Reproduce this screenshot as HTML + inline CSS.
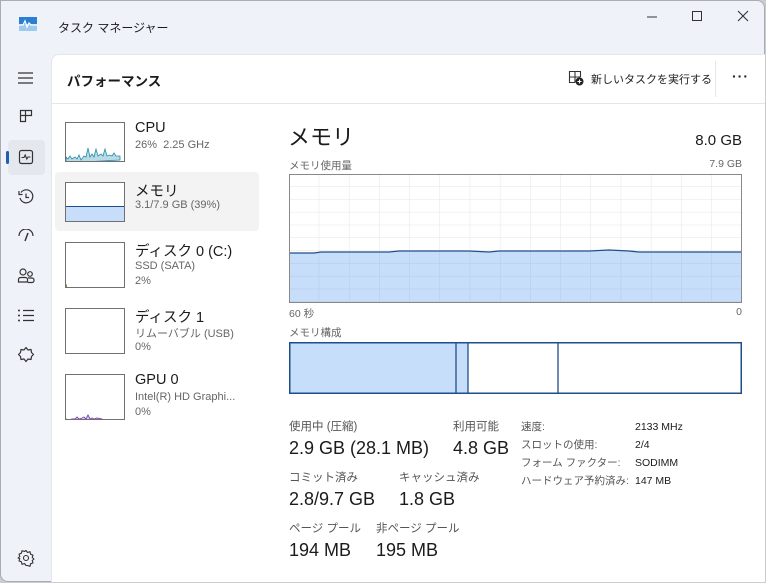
<!DOCTYPE html>
<html><head><meta charset="utf-8"><style>
*{margin:0;padding:0;box-sizing:border-box}
body{width:766px;height:583px;overflow:hidden;background:#c9ccd1;font-family:"Liberation Sans","Noto Sans CJK JP",sans-serif;color:#1b1b1b;position:relative}
.win{position:absolute;left:0;top:0;width:765px;height:582px;background:#eff3f9;border:1px solid #a9adb3;border-radius:0 8px 8px 8px}
.a{position:absolute;white-space:nowrap}
.panel{position:absolute;left:50px;top:53px;width:714px;height:528px;background:#fff;border-radius:8px 0 0 0;border-left:1px solid #e3e6ea;border-top:1px solid #e3e6ea}
.thumb{position:absolute;left:64px;width:60px;border:1px solid #707070;background:#fff;overflow:hidden}
.s{font-size:11px;color:#666}
.lbl{font-size:10.5px;color:#666}
.val{font-size:18px;color:#1b1b1b}
svg{position:absolute}
</style></head><body>
<div class="win">
<svg style="left:18px;top:16px" width="18" height="14" viewBox="0 0 18 14"><rect x="0" y="0" width="18" height="14" rx="1" fill="#9cc9f0"/><rect x="0" y="0" width="18" height="7" fill="#2a7fd4"/><path d="M0 8 L4 8 L6 4 L8 10 L10 6 L12 8 L18 8" stroke="#fff" stroke-width="1.3" fill="none"/></svg>
<div class="a" style="left:57px;top:18px;font-size:12px">タスク マネージャー</div>
<svg style="left:645px;top:10px" width="12" height="12"><line x1="1" y1="6" x2="11" y2="6" stroke="#333" stroke-width="1"/></svg>
<svg style="left:690px;top:9px" width="12" height="12"><rect x="1.5" y="1.5" width="9" height="9" stroke="#333" fill="none"/></svg>
<svg style="left:736px;top:9px" width="12" height="12"><path d="M1 1L11 11M11 1L1 11" stroke="#333" stroke-width="1.1"/></svg>
<svg style="left:16px;top:70px" width="18" height="14"><path d="M1 2h15M1 7h15M1 12h15" stroke="#333" stroke-width="1.2"/></svg>
<svg style="left:18px;top:108px" width="14" height="14"><path d="M1.5 1.5h5v11h-5zM6.5 1.5h6v5h-11M6.5 6.5" stroke="#333" stroke-width="1.2" fill="none"/></svg>
<div class="a" style="left:7px;top:139px;width:37px;height:35px;background:#e4e8ee;border-radius:4px"></div>
<div class="a" style="left:5px;top:150px;width:3px;height:13px;background:#1f5fb0;border-radius:2px"></div>
<svg style="left:17px;top:148px" width="16" height="16"><rect x="1.5" y="1.5" width="13" height="13" rx="2" stroke="#333" fill="none" stroke-width="1.2"/><path d="M3.5 8.5h2.5l1.2-2.5 1.6 4 1.2-2h2.5" stroke="#333" fill="none" stroke-width="1.1"/></svg>
<svg style="left:16px;top:187px" width="18" height="18"><path d="M4 4.5A6.5 6.5 0 1 1 3 10" stroke="#333" fill="none" stroke-width="1.2"/><path d="M2 3v3.5h3.5" stroke="#333" fill="none" stroke-width="1.2"/><path d="M9 5.5v4h3" stroke="#333" fill="none" stroke-width="1.2"/></svg>
<svg style="left:16px;top:228px" width="18" height="16"><path d="M2 7a7 7 0 0 1 14 0" stroke="#333" fill="none" stroke-width="1.2"/><path d="M11 4L8 12" stroke="#333" stroke-width="1.5"/></svg>
<svg style="left:16px;top:266px" width="18" height="18"><circle cx="6" cy="5" r="3" stroke="#333" fill="none" stroke-width="1.2"/><circle cx="13" cy="7" r="2.3" stroke="#333" fill="none" stroke-width="1.2"/><path d="M1.5 15v-2.5a2 2 0 0 1 2-2h5a2 2 0 0 1 2 2V15zM11 11h4a2 2 0 0 1 2 2v.5a2 2 0 0 1-2 2h-4" stroke="#333" fill="none" stroke-width="1.2"/></svg>
<svg style="left:16px;top:307px" width="18" height="16"><path d="M6 2.5h11M6 7.5h11M6 12.5h11" stroke="#333" stroke-width="1.2"/><circle cx="2" cy="2.5" r="1" fill="#333"/><circle cx="2" cy="7.5" r="1" fill="#333"/><circle cx="2" cy="12.5" r="1" fill="#333"/></svg>
<svg style="left:16px;top:345px" width="18" height="18"><path d="M9 1.5l2 2.5 3-.5.5 3 2 2-2 2 -.5 3-3-.5-2 2.5-2-2.5-3 .5-.5-3-2-2 2-2 .5-3 3 .5z" stroke="#333" fill="none" stroke-width="1.2" stroke-linejoin="round"/></svg>
<svg style="left:16px;top:548px" width="18" height="18"><circle cx="9" cy="9" r="2.5" stroke="#333" fill="none" stroke-width="1.1"/><path d="M9 1.5l1.5 2 2.5-.8.6 2.5 2.4.9-.8 2.4 1.8 1.5-1.8 1.5.8 2.4-2.4.9-.6 2.5-2.5-.8L9 16.5l-1.5-2-2.5.8-.6-2.5-2.4-.9.8-2.4L1 9l1.8-1.5-.8-2.4 2.4-.9.6-2.5 2.5.8z" stroke="#333" fill="none" stroke-width="1.1" stroke-linejoin="round"/></svg>

<div class="panel"></div>
<div class="a" style="left:66px;top:69px;font-size:13.5px;font-weight:bold">パフォーマンス</div>
<svg style="left:567px;top:69px" width="16" height="16"><path d="M7 12.5H1.5v-11h11V7M1.5 7h11M7 1.5v11" stroke="#333" fill="none" stroke-width="1.1"/><circle cx="11.5" cy="11.5" r="4" fill="#222"/><path d="M11.5 9.5v4M9.5 11.5h4" stroke="#fff" stroke-width="1.1"/></svg>
<div class="a" style="left:590px;top:70px;font-size:11px">新しいタスクを実行する</div>
<div class="a" style="left:714px;top:60px;width:1px;height:36px;background:#e8e8e8"></div>
<div class="a" style="left:731px;top:67px;font-size:14px;font-weight:bold;letter-spacing:1px">···</div>
<div class="a" style="left:51px;top:102px;width:713px;height:1px;background:#e5e5e5"></div>

<div class="thumb" style="top:121px;height:40px"><svg style="left:0;top:18px" width="60" height="22" viewBox="0 0 60 22"><path d="M0 22V16l2 2 2-3 2 3 3-2 2 2 2-4 2 5 3-4 2 1 2-9 2 9 2-3 2 3 2-8 2 7 3-2 2 2 2-7 2 7 3-1 2 1 2-3 2 3 4 0v4z" fill="#b8dbe8" stroke="#2a8aa8" stroke-width="0.8"/></svg></div>
<div class="a" style="left:134px;top:119px;font-size:14.5px">CPU</div>
<div class="a s" style="left:134px;top:138px">26%&nbsp; 2.25 GHz</div>
<div class="a" style="left:54px;top:171px;width:204px;height:59px;background:#f3f3f3;border-radius:4px"></div>
<div class="thumb" style="top:181px;height:40px"><div class="a" style="left:0;top:23px;width:60px;height:16px;background:#c7defa;border-top:1px solid #1e4f8a"></div></div>
<div class="a" style="left:134px;top:179px;font-size:14.5px">メモリ</div>
<div class="a s" style="left:134px;top:198px">3.1/7.9 GB (39%)</div>
<div class="thumb" style="top:241px;height:46px"><svg style="left:0;top:38px" width="60" height="8"><path d="M0 8V3l1 5h59" stroke="#5a9a3a" fill="#cfe6c0" stroke-width="1"/></svg></div>
<div class="a" style="left:134px;top:239px;font-size:14.5px">ディスク 0 (C:)</div>
<div class="a s" style="left:134px;top:259px">SSD (SATA)</div>
<div class="a s" style="left:134px;top:274px">2%</div>
<div class="thumb" style="top:307px;height:46px"></div>
<div class="a" style="left:134px;top:305px;font-size:14.5px">ディスク 1</div>
<div class="a s" style="left:134px;top:324px">リムーバブル (USB)</div>
<div class="a s" style="left:134px;top:340px">0%</div>
<div class="thumb" style="top:373px;height:46px"><svg style="left:0;top:36px" width="60" height="10"><path d="M0 10V8l3 1 3-1 3 0 2-2 2 2 3-1 2-1 2 2 2-4 2 4 2-1 2 1 3-1 5 1v3z" fill="#e0d0f0" stroke="#7a3fb8" stroke-width="0.9"/></svg></div>
<div class="a" style="left:134px;top:371px;font-size:14.5px">GPU 0</div>
<div class="a s" style="left:134px;top:390px">Intel(R) HD Graphi...</div>
<div class="a s" style="left:134px;top:405px">0%</div>

<div class="a" style="left:287px;top:119px;font-size:22px">メモリ</div>
<div class="a" style="left:600px;top:131px;width:141px;text-align:right;font-size:15px">8.0 GB</div>
<div class="a lbl" style="left:288px;top:157px">メモリ使用量</div>
<div class="a lbl" style="left:640px;top:157px;width:101px;text-align:right">7.9 GB</div>
<svg style="left:288px;top:173px" width="453" height="129" viewBox="0 0 453 129">
<defs><pattern id="g" width="30.2" height="12.8" patternUnits="userSpaceOnUse"><path d="M30.2 0V12.8M0 12.8H30.2" stroke="#e6e6e6" stroke-width="1" fill="none"/></pattern>
<pattern id="g2" width="30.2" height="12.8" patternUnits="userSpaceOnUse"><path d="M30.2 0V12.8M0 12.8H30.2" stroke="#b3cbe6" stroke-width="1" fill="none"/></pattern></defs>
<rect width="453" height="129" fill="url(#g)"/>
<path d="M0 79 L25 79 L32 78 L100 78 L110 77 L180 77 L200 78 L210 77 L300 77 L320 76 L340 77 L350 78 L453 78 V129 H0Z" fill="#c7defa"/>
<rect y="78" width="453" height="51" fill="url(#g2)"/>
<path d="M0 79 L25 79 L32 78 L100 78 L110 77 L180 77 L200 78 L210 77 L300 77 L320 76 L340 77 L350 78 L453 78" stroke="#1e4f8a" stroke-width="1.3" fill="none"/>
<rect x="0.5" y="0.5" width="452" height="128" stroke="#888" fill="none"/>
</svg>
<div class="a lbl" style="left:288px;top:305px">60 秒</div>
<div class="a lbl" style="left:700px;top:305px;width:41px;text-align:right">0</div>
<div class="a lbl" style="left:288px;top:324px">メモリ構成</div>
<svg style="left:288px;top:341px" width="453" height="52"><rect x="0" y="0" width="179" height="52" fill="#c7defa"/><rect x="0.75" y="0.75" width="451.5" height="50.5" stroke="#1e4f8a" stroke-width="1.5" fill="none"/><path d="M167 0v52M179 0v52M269 0v52" stroke="#1e4f8a" stroke-width="1.3"/></svg>

<div class="a" style="left:288px;top:417px;font-size:11.5px;color:#555">使用中 (圧縮)</div>
<div class="a val" style="left:288px;top:437px">2.9 GB (28.1 MB)</div>
<div class="a" style="left:452px;top:417px;font-size:11.5px;color:#555">利用可能</div>
<div class="a val" style="left:452px;top:437px">4.8 GB</div>
<div class="a" style="left:288px;top:468px;font-size:11.5px;color:#555">コミット済み</div>
<div class="a val" style="left:288px;top:488px">2.8/9.7 GB</div>
<div class="a" style="left:398px;top:468px;font-size:11.5px;color:#555">キャッシュ済み</div>
<div class="a val" style="left:398px;top:488px">1.8 GB</div>
<div class="a" style="left:288px;top:519px;font-size:11.5px;color:#555">ページ プール</div>
<div class="a val" style="left:288px;top:539px">194 MB</div>
<div class="a" style="left:375px;top:519px;font-size:11.5px;color:#555">非ページ プール</div>
<div class="a val" style="left:375px;top:539px">195 MB</div>

<div class="a" style="left:520px;top:417px;font-size:10.5px;color:#555;line-height:18px">速度:<br>スロットの使用:<br>フォーム ファクター:<br>ハードウェア予約済み:</div>
<div class="a" style="left:634px;top:417px;font-size:10.5px;color:#1b1b1b;line-height:18px">2133 MHz<br>2/4<br>SODIMM<br>147 MB</div>
</div>
</body></html>
